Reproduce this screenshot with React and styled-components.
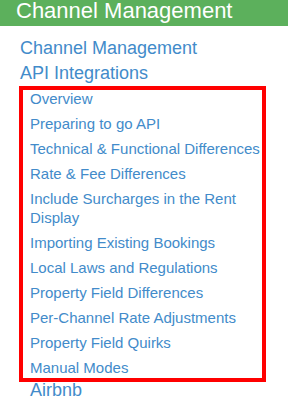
import React from 'react';
import styled, { createGlobalStyle } from 'styled-components';

const GlobalStyle = createGlobalStyle`
  html, body {
    margin: 0;
    padding: 0;
    background: #fff;
    font-family: "Liberation Sans", Arial, sans-serif;
  }
`;

const Page = styled.div`
  width: 288px;
  height: 405px;
  overflow: hidden;
  background: #fff;
`;

const SectionHeader = styled.div`
  height: 26px;
  background-color: #5cb05c;
  color: #fff;
  font-size: 22px;
  line-height: 22px;
  padding-left: 16px;
  white-space: nowrap;
`;

const Nav = styled.ul`
  list-style: none;
  margin: 10px 0 0;
  padding: 0 0 0 20px;
`;

const NavItem = styled.li`
  font-size: 18px;
  line-height: 25px;
  margin-top: ${props => props.pull || 0}px;
  padding-left: ${props => props.indent || 0}px;
`;

const Link = styled.a`
  color: #428bca;
  text-decoration: none;
`;

const Highlight = styled.div`
  box-sizing: border-box;
  width: 247px;
  margin-left: -1px;
  border: 4px solid #ff0000;
  padding: 0 0 0 7px;
`;

const SubNav = styled.ul`
  list-style: none;
  margin: -4px 0 -2px;
  padding: 0;
`;

const SubItem = styled.li`
  font-size: 15px;
  line-height: 19px;
  padding: 3px 0;
`;

const subPages = [
  'Overview',
  'Preparing to go API',
  'Technical & Functional Differences',
  'Rate & Fee Differences',
  'Include Surcharges in the Rent Display',
  'Importing Existing Bookings',
  'Local Laws and Regulations',
  'Property Field Differences',
  'Per-Channel Rate Adjustments',
  'Property Field Quirks',
  'Manual Modes',
];

const App = () => {
  return (
    <Page>
      <GlobalStyle />
      <SectionHeader>Channel Management</SectionHeader>
      <Nav>
        <NavItem><Link href="#">Channel Management</Link></NavItem>
        <NavItem><Link href="#">API Integrations</Link></NavItem>
        <Highlight>
          <SubNav>
            {subPages.map(title => (
              <SubItem key={title}><Link href="#">{title}</Link></SubItem>
            ))}
          </SubNav>
        </Highlight>
        <NavItem pull={-4} indent={10}><Link href="#">Airbnb</Link></NavItem>
      </Nav>
    </Page>
  );
};

export default App;
